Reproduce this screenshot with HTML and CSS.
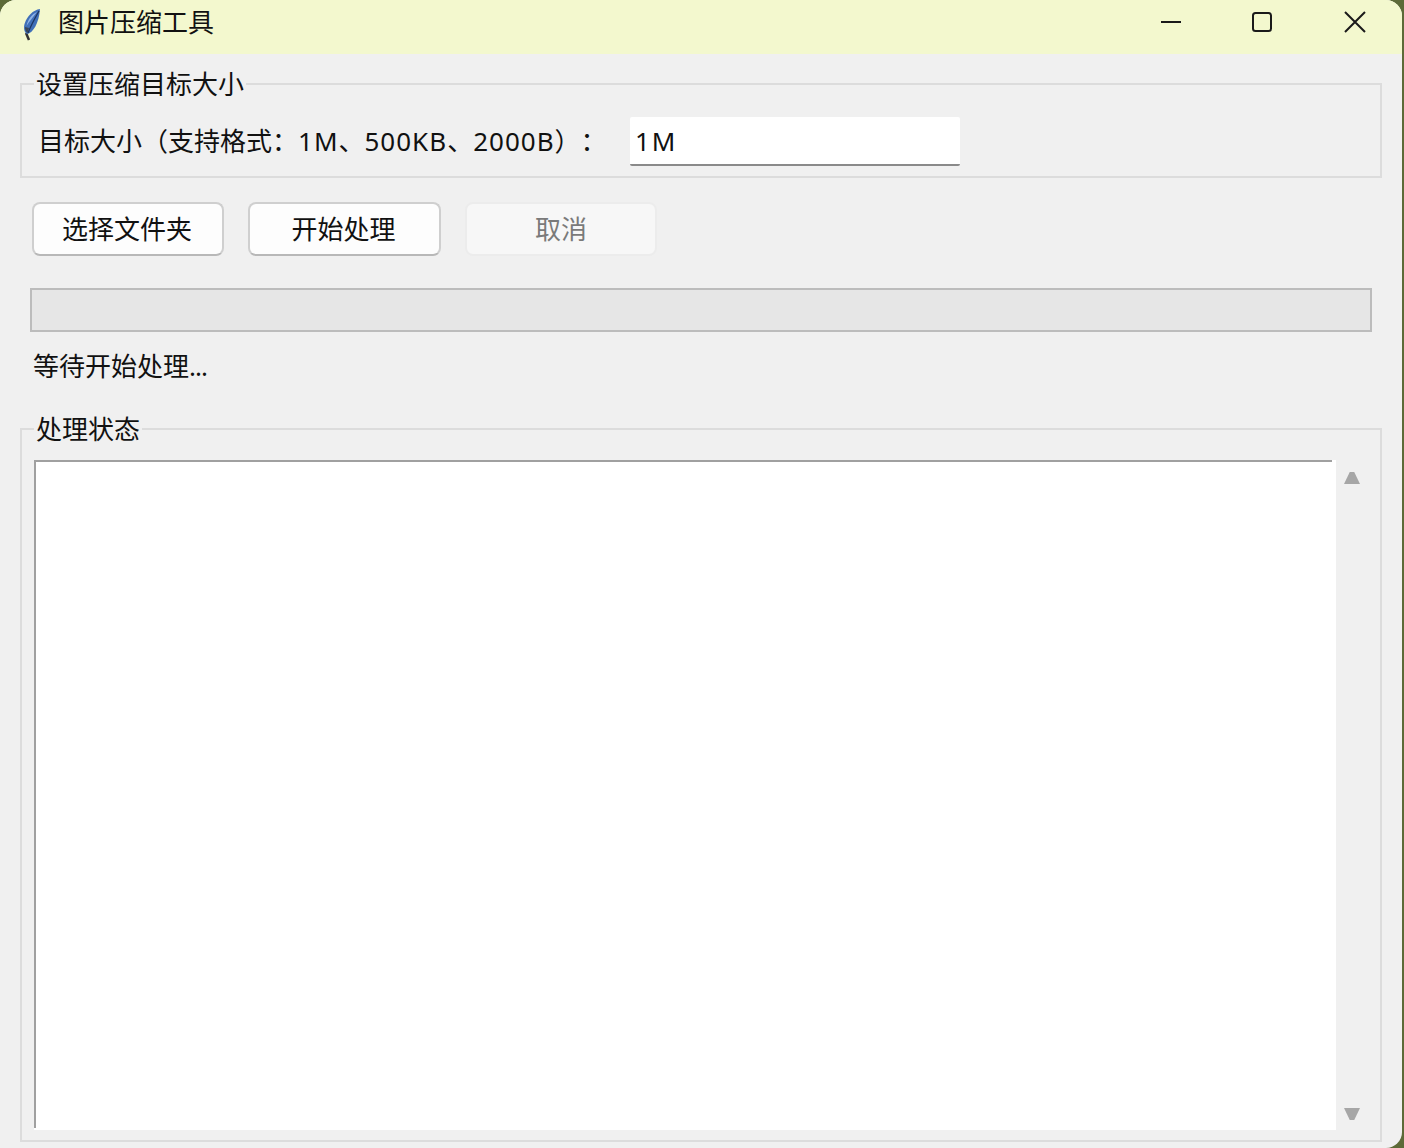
FILE: index.html
```html
<!DOCTYPE html>
<html lang="zh-CN">
<head>
<meta charset="utf-8">
<title>图片压缩工具</title>
<link rel="stylesheet" href="styles.css">
</head>
<body>
<div class="window">
  <header class="titlebar">
    <svg class="app-icon" width="24" height="34" viewBox="0 0 24 34">
      <path d="M6 25 L9 32" stroke="#333" stroke-width="2.500" fill="none"/>
      <path d="M20 1 C13 2 7 8 4.500 16 C3.500 20 4 24 7 26 C13 25 19 15 20 1 Z" fill="#3f6fb8"/>
      <path d="M17 4 C12 6 8 11 6.500 18 C9 14 13 9 17 4 Z" fill="#8db2e6"/>
      <path d="M19 3 C15 10 11 17 8 25" fill="none" stroke="#1d3560" stroke-width="1.300"/>
      <path d="M5 19 C5 22 6 24 7.500 25 L9 20 Z" fill="#3a4658"/>
    </svg>
    <span class="title-text">图片压缩工具</span>
    <div class="win-controls">
      <svg class="win-btn" width="22" height="22" viewBox="0 0 22 22"><path d="M1 11 H21" stroke="#1a1a1a" stroke-width="2" fill="none"/></svg>
      <svg class="win-btn" width="22" height="22" viewBox="0 0 22 22"><rect x="2" y="2" width="18" height="18" rx="2.500" stroke="#1a1a1a" stroke-width="2" fill="none"/></svg>
      <svg class="win-btn win-close" width="22" height="22" viewBox="0 0 22 22"><path d="M1 1 L21 21 M21 1 L1 21" stroke="#1a1a1a" stroke-width="2" fill="none"/></svg>
    </div>
  </header>
  <main class="content">
    <fieldset class="group group-target">
      <legend class="group-title">设置压缩目标大小</legend>
      <div class="target-row">
        <label class="target-label">目标大小（支持格式：<span class="latin">1M</span>、<span class="latin">500KB</span>、<span class="latin">2000B</span>）：</label>
        <div class="entry">1M</div>
      </div>
    </fieldset>
    <div class="button-row">
      <div class="btn">选择文件夹</div>
      <div class="btn btn-wide">开始处理</div>
      <div class="btn btn-disabled">取消</div>
    </div>
    <div class="progress"></div>
    <div class="status">等待开始处理<span class="dots">...</span></div>
    <fieldset class="group group-log">
      <legend class="group-title">处理状态</legend>
      <div class="log-row">
        <div class="log-text"></div>
        <div class="scrollbar">
          <span class="arrow arrow-up"></span>
          <span class="arrow arrow-down"></span>
        </div>
      </div>
    </fieldset>
  </main>
</div>
</body>
</html>
```

FILE: styles.css
```css
html, body {
  margin: 0;
  padding: 0;
  height: 1148px;
  overflow: hidden;
  background: #5d6a38;
}
body {
  font-family: "Noto Sans", "Noto Sans CJK SC", sans-serif;
  font-size: 26px;
  color: #111;
  text-spacing-trim: space-all;
}
.window {
  width: 1402px;
  height: 1148px;
  background: #f0f0f0;
  border-radius: 16px 16px 16px 0;
  overflow: hidden;
  display: flex;
  flex-direction: column;
}
.titlebar {
  height: 54px;
  flex: none;
  background: #f3f8ce;
  display: flex;
  align-items: center;
  padding: 0 36px 0 20px;
  box-sizing: border-box;
}
.app-icon {
  flex: none;
  margin-bottom: 4px;
}
.title-text {
  margin-left: 14px;
  line-height: 46px;
  margin-bottom: 10px;
}
.win-controls {
  margin-left: auto;
  display: flex;
  gap: 69px;
  margin-bottom: 10px;
}
.win-btn {
  display: block;
}
.win-close {
  margin-left: 2px;
}
.content {
  flex: 1;
  display: flex;
  flex-direction: column;
  padding: 0 20px 6px;
  min-height: 0;
}
.group {
  margin: 0;
  padding: 0;
  border: 2px solid #dcdcdc;
  min-width: 0;
}
.group-title {
  margin-left: 12px;
  padding: 0 2px;
  height: 30px;
  line-height: 30px;
}
.group-target {
  margin-top: 15px;
  height: 109px;
  box-sizing: border-box;
  flex: none;
}
.target-row {
  display: flex;
  align-items: flex-start;
  padding-left: 16px;
  margin-top: 18px;
}
.target-label {
  width: 592px;
  flex: none;
  line-height: 48px;
}
.latin {
  letter-spacing: 1px;
}
.entry {
  width: 330px;
  height: 49px;
  box-sizing: border-box;
  background: #fff;
  border-bottom: 2px solid #8a8a8a;
  border-radius: 2px;
  padding-left: 5px;
  line-height: 49px;
  letter-spacing: 2px;
}
.button-row {
  display: flex;
  gap: 24px;
  padding-left: 12px;
  margin-top: 24px;
  flex: none;
}
.btn {
  width: 192px;
  height: 54px;
  box-sizing: border-box;
  border: 2px solid #cfcfcf;
  border-bottom-color: #b8b8b8;
  border-radius: 8px;
  background: #fdfdfd;
  padding-right: 2px;
  display: flex;
  align-items: center;
  justify-content: center;
  line-height: 1;
}
.btn-wide {
  width: 193px;
}
.btn-disabled {
  background: #f7f7f7;
  border-color: #ececec;
  color: #7a7a7a;
  padding-right: 0;
}
.progress {
  margin: 32px 10px 0;
  height: 44px;
  flex: none;
  box-sizing: border-box;
  background: #e6e6e6;
  border: 2px solid #bcbcbc;
}
.status {
  margin: 14px 0 0 13px;
  line-height: 40px;
  flex: none;
}
.dots {
  letter-spacing: -1px;
}
.group-log {
  margin-top: 28px;
  flex: 1;
  min-height: 0;
  box-sizing: border-box;
}
.log-row {
  display: flex;
  height: 670px;
  padding-left: 12px;
  margin-top: 16px;
}
.log-text {
  width: 1302px;
  height: 670px;
  flex: none;
  background:
    linear-gradient(#a0a0a0, #a0a0a0) 0 0 / 1298px 2px no-repeat,
    linear-gradient(#a0a0a0, #a0a0a0) 0 0 / 2px 668px no-repeat,
    #fff;
}
.scrollbar {
  flex: 1;
  position: relative;
}
.arrow {
  position: absolute;
  left: 8px;
  width: 16px;
  height: 12px;
  background: #a6a6a6;
}
.arrow-up {
  top: 12px;
  clip-path: polygon(36% 0, 64% 0, 100% 100%, 0 100%);
}
.arrow-down {
  bottom: 10px;
  clip-path: polygon(0 0, 100% 0, 64% 100%, 36% 100%);
}
```
